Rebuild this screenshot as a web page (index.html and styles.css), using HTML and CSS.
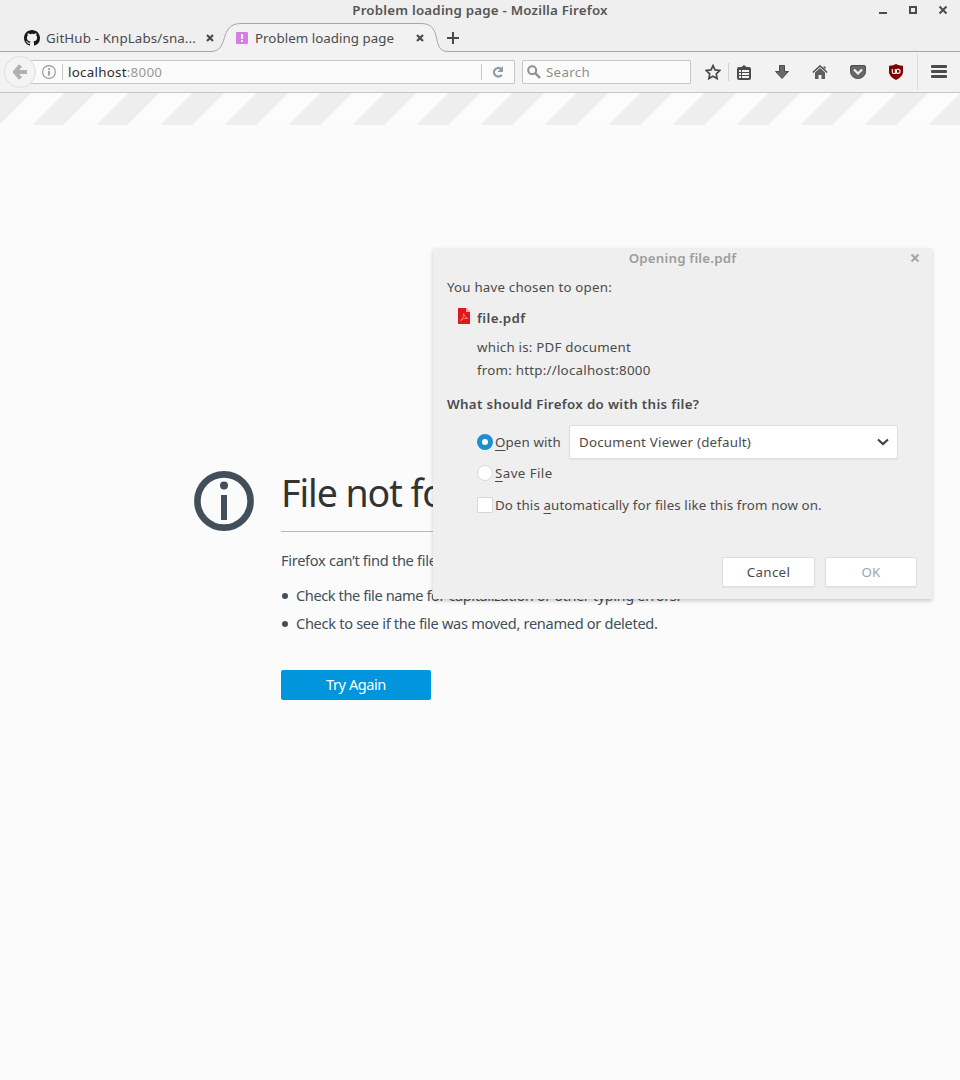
FILE: index.html
```html
<!DOCTYPE html>
<html lang="en">
<head>
<meta charset="utf-8">
<title>Problem loading page</title>
<link rel="stylesheet" href="styles.css">
</head>
<body>
<header class="chrome">
  <div class="titlebar">
    <span class="window-title">Problem loading page - Mozilla Firefox</span>
    <div class="window-controls">
      <svg width="10" height="10" viewBox="0 0 10 10"><path d="M1 7h8v2H1z" fill="#4b4b4b"/></svg>
      <svg width="10" height="10" viewBox="0 0 10 10"><path d="M2 2h6v6H2z" fill="none" stroke="#4b4b4b" stroke-width="2"/></svg>
      <svg width="10" height="10" viewBox="0 0 10 10"><path d="M1.5 1.5l7 7m0-7l-7 7" stroke="#4b4b4b" stroke-width="2"/></svg>
    </div>
  </div>
  <div class="tabstrip">
    <svg class="tab-outline" width="960" height="29" viewBox="0 0 960 29">
      <path d="M211 29C229 29 219 .5 241 .5H422C444 .5 432 29 450 29Z" fill="#f2f2f2"/>
      <path d="M0 28.500H211C230 28.500 218 .5 241 .5H421C444 .5 430 28.500 448 28.500H960" fill="none" stroke="#a4a6a9"/>
    </svg>
    <div class="tab tab-github">
      <svg width="16" height="16" viewBox="0 0 16 16"><path fill="#1b1817" d="M8 0C3.580 0 0 3.580 0 8c0 3.540 2.290 6.530 5.470 7.590.4.070.55-.17.55-.38 0-.19-.01-.82-.01-1.490-2.010.37-2.530-.49-2.690-.94-.09-.23-.48-.94-.82-1.130-.28-.15-.68-.52-.01-.53.63-.01 1.080.58 1.230.82.72 1.210 1.870.87 2.330.66.07-.52.28-.87.51-1.070-1.780-.2-3.640-.89-3.640-3.950 0-.87.31-1.590.82-2.150-.08-.2-.36-1.020.08-2.120 0 0 .67-.21 2.200.82A7.600 7.600 0 0 1 8 3.870c.68 0 1.360.09 2 .27 1.530-1.040 2.200-.82 2.200-.82.44 1.100.16 1.920.08 2.120.51.56.82 1.270.82 2.150 0 3.070-1.870 3.750-3.650 3.950.29.25.54.73.54 1.480 0 1.070-.01 1.930-.01 2.200 0 .21.15.46.55.38A8 8 0 0 0 16 8c0-4.420-3.580-8-8-8z"/></svg>
      <span class="tab-label label-github">GitHub - KnpLabs/sna...</span>
      <svg class="tab-close" width="8" height="8" viewBox="0 0 8 8"><path d="M1 1l6 6m0-6l-6 6" stroke="#4b4b4b" stroke-width="2.200"/></svg>
    </div>
    <div class="tab tab-problem">
      <svg width="12" height="12" viewBox="0 0 12 12"><rect width="12" height="12" rx="1" fill="#d67fe2"/><path d="M5 2h2v5H5zM5 8h2v2H5z" fill="#fff"/></svg>
      <span class="tab-label label-problem">Problem loading page</span>
      <svg class="tab-close" width="8" height="8" viewBox="0 0 8 8"><path d="M1 1l6 6m0-6l-6 6" stroke="#4b4b4b" stroke-width="2.200"/></svg>
    </div>
    <svg class="new-tab" width="12" height="12" viewBox="0 0 12 12"><path d="M6 0v12M0 6h12" stroke="#4b4b4b" stroke-width="2"/></svg>
  </div>
  <div class="toolbar">
    <div class="back">
      <svg width="14" height="16" viewBox="0 0 14 16"><path d="M7.500 1.500L2 8l5.500 6.500M2 8h12" fill="none" stroke="#b1b1b1" stroke-width="4"/></svg>
    </div>
    <div class="urlbar">
      <svg class="identity" width="14" height="14" viewBox="0 0 14 14"><circle cx="7" cy="7" r="6.400" fill="none" stroke="#979797" stroke-width="1.100"/><path d="M6.200 6h1.600v4.500H6.200zM6.200 3.300h1.600v1.600H6.200z" fill="#8b8b8b"/></svg>
      <span class="bar-line"></span>
      <span class="url">localhost<span class="port">:8000</span></span>
      <span class="bar-line reload-line"></span>
      <svg class="reload" width="12" height="12" viewBox="0 0 12 12"><path d="M8.800 2.800A4.300 4.300 0 1 0 9.700 8.800" fill="none" stroke="#8d9ba8" stroke-width="2.200"/><path d="M11 0v6H5.500z" fill="#8d9ba8"/></svg>
    </div>
    <div class="searchbar">
      <svg width="14" height="14" viewBox="0 0 14 14"><circle cx="5.200" cy="5.200" r="4" fill="none" stroke="#8f8f8f" stroke-width="2"/><path d="M8.200 8.200l4.800 4.800" stroke="#8f8f8f" stroke-width="2.400"/></svg>
      <span class="search-text">Search</span>
    </div>
    <div class="tools">
      <svg width="16" height="16" viewBox="0 0 16 16"><path d="M8 1.600l2 4.300 4.700.6-3.400 3.300.8 4.800L8 12.300l-4.100 2.300.8-4.800L1.300 6.500 6 5.900z" fill="none" stroke="#4a4a4a" stroke-width="1.700"/></svg>
      <span class="tool-line"></span>
      <svg width="14" height="15" viewBox="0 0 14 15"><path d="M2 2h2.500L7 0l2.500 2H12a2 2 0 0 1 2 2V13a2 2 0 0 1-2 2H2a2 2 0 0 1-2-2V4a2 2 0 0 1 2-2z" fill="#4b4b4b"/><path d="M2 5h2v2H2zM5 5h7v2H5zM2 8h2v2H2zM5 8h7v2H5zM2 11h2v2H2zM5 11h7v2H5z" fill="#f1f1f1"/></svg>
      <svg width="14" height="14" viewBox="0 0 14 14"><path d="M4.500.5h5v6h4L7 13.500.5 6.500h4z" fill="#686868" stroke="#4b4b4b"/></svg>
      <svg width="16" height="14" viewBox="0 0 16 14"><path d="M3 7.500l5-4.600 5 4.600V14H9.500v-4h-3v4H3z" fill="#606060"/><path d="M.8 7.500L8 .9l7.200 6.600" fill="none" stroke="#505050" stroke-width="1.500"/><path d="M11.500 1.500h2v3l-2-2z" fill="#505050"/></svg>
      <svg width="16" height="14" viewBox="0 0 16 14"><path d="M2 .5h12q1.500 0 1.500 1.500v4.500a7.500 7 0 0 1-15 0V2Q.5.500 2 .5z" fill="#686868" stroke="#4b4b4b"/><path d="M4 4.500l4 4 4-4" fill="none" stroke="#f1f1f1" stroke-width="2.200"/></svg>
      <svg width="14" height="16" viewBox="0 0 14 16"><path d="M7 0q3 2 7 1.800v7Q13 13 7 16 1 13 0 8.800v-7Q4 2 7 0z" fill="#800000"/><path d="M3.300 5v3q0 1.500 1.500 1.500h1.500V5M8.500 5.200h.5a2 2 0 0 1 0 4.200h-.5q-1 0-1-1V6.200q0-1 1-1z" fill="none" stroke="#fff" stroke-width="1.100"/></svg>
    </div>
    <div class="menu-button">
      <svg width="16" height="13" viewBox="0 0 16 13"><rect width="16" height="3" rx="1"/><rect y="5" width="16" height="3" rx="1"/><rect y="10" width="16" height="3" rx="1"/></svg>
    </div>
  </div>
</header>
<main class="page">
  <div class="stripes"></div>
  <section class="error">
    <svg class="info" width="60" height="60" viewBox="0 0 60 60"><circle cx="30" cy="30" r="26.600" fill="none" stroke="#424f5a" stroke-width="6.600"/><circle cx="30" cy="14.500" r="4" fill="#424f5a"/><path d="M27 24h6v25h-6z" fill="#424f5a"/></svg>
    <div class="error-body">
      <h1 class="heading">File not found</h1>
      <p class="lead">Firefox can’t find the file at http://localhost:8000.</p>
      <ul class="hints">
        <li class="hint-a">Check the file name for capitalization or other typing errors.</li>
        <li class="hint-b">Check to see if the file was moved, renamed or deleted.</li>
      </ul>
      <button class="retry"><span>Try Again</span></button>
    </div>
  </section>
</main>
<div class="dialog">
  <div class="dialog-title"><span class="dialog-name">Opening file.pdf</span>
    <svg class="dialog-close" width="10" height="10" viewBox="0 0 10 10"><path d="M1.500 1.500l7 7m0-7l-7 7" stroke="#a8a8a8" stroke-width="2.200"/></svg>
  </div>
  <p class="row chosen"><span class="t-chosen">You have chosen to open:</span></p>
  <div class="row file"><svg width="12" height="16" viewBox="0 0 12 16"><path d="M0 0h8l4 4v12H0z" fill="#df1818"/><path d="M8 0l4 4H8z" fill="#f3aaaa"/><path d="M5.600 5.500q1 4-3.300 7.200 3-3 7.500-2.300Q6.500 9.500 5.600 5.500z" fill="none" stroke="#f58b8b" stroke-width=".8"/></svg><b class="t-file">file.pdf</b></div>
  <p class="row which"><span class="t-which">which is: PDF document</span></p>
  <p class="row from"><span class="t-from">from: http://localhost:8000</span></p>
  <p class="row question"><b class="t-question">What should Firefox do with this file?</b></p>
  <div class="row open"><i class="radio selected"></i><span class="t-open"><u>O</u>pen with</span>
    <div class="select"><span class="t-select">Document Viewer (default)</span><svg width="12" height="8" viewBox="0 0 12 8"><path d="M1 1.500l5 4.500 5-4.500" fill="none" stroke="#3f3f3f" stroke-width="2.100"/></svg></div>
  </div>
  <div class="row save"><i class="radio"></i><span class="t-save"><u>S</u>ave File</span></div>
  <div class="row auto"><i class="checkbox"></i><span class="t-auto">Do this <u>a</u>utomatically for files like this from now on.</span></div>
  <div class="buttons"><button class="button cancel"><span class="t-cancel">Cancel</span></button><button class="button ok">OK</button></div>
</div>
</body>
</html>
```
FILE: styles.css
```css
* { box-sizing: border-box; }
body { margin: 0; height: 1080px; overflow: hidden; background: #fbfbfb; color: #4b4b4b; font: 13.33px/20px "Noto Sans", "Open Sans", sans-serif; white-space: nowrap; }
p, h1, ul { margin: 0; padding: 0; font: inherit; }
svg { flex: none; display: block; }
button { font: inherit; color: inherit; padding: 0; }

.chrome { background: #efefef; }
.titlebar { height: 23px; position: relative; text-align: center; }
.window-title { font-weight: 600; color: #555; letter-spacing: .2px; }
.window-controls { position: absolute; right: 12px; top: 5px; display: flex; gap: 20px; }

.tabstrip { position: relative; height: 29px; display: flex; align-items: center; }
.tab-outline { position: absolute; left: 0; top: 0; }
.tab { position: relative; display: flex; align-items: center; height: 29px; padding-top: 1px; }
.tab-github { width: 214px; margin-left: 24px; }
.tab-problem { width: 208px; margin-left: -2px; }
.tab-label { margin-left: 6px; }
.label-github { letter-spacing: .13px; }
.label-problem { margin-left: 7px; letter-spacing: .03px; }
.tab-close { margin-left: auto; }
.tab-github .tab-close { margin-right: 24px; }
.tab-problem .tab-close { margin-right: 20px; }
.new-tab { position: relative; margin-left: 3px; }

.toolbar { height: 41px; background: #f2f2f2; border-bottom: 1px solid #c5c5c5; display: flex; align-items: center; padding-left: 4px; }
.back { width: 32px; height: 32px; border: 1px solid #dedede; border-radius: 50%; background: #f4f4f4; display: flex; align-items: center; justify-content: center; position: relative; z-index: 1; flex: none; }
.urlbar { width: 485px; height: 24px; margin-left: -6px; padding-left: 11px; border: 1px solid #c6c6c6; border-radius: 2px; background: #fbfbfb; display: flex; align-items: center; flex: none; }
.bar-line { width: 1px; height: 16px; background: #c6c6c6; margin: 0 5px 0 6px; }
.url { color: #2e2e2e; letter-spacing: .27px; }
.port { color: #999; }
.reload-line { margin: 0 10px 0 auto; }
.reload { margin-right: 10px; }
.searchbar { width: 169px; height: 24px; margin-left: 7px; padding-left: 4px; border: 1px solid #c6c6c6; border-radius: 2px; background: #fbfbfb; display: flex; align-items: center; gap: 5px; color: #8f8f8f; flex: none; }
.search-text { letter-spacing: .3px; }
.tools { display: flex; align-items: center; margin-left: 14px; }
.tool-line { width: 1px; height: 18px; background: #d2d2d2; margin: 0 8px 0 7px; }
.tools svg + svg { margin-left: 23px; }
.tools svg:nth-of-type(3) { margin-left: 24px; }
.tools svg:nth-of-type(5) { margin-left: 22px; }
.menu-button { width: 43px; height: 36px; margin-left: 14px; padding-left: 13px; border-left: 1px solid #dcdcdc; display: flex; align-items: center; fill: #4b4b4b; padding-bottom: 1px; }

.stripes { height: 32px; background: repeating-linear-gradient(135deg, #eee 0 22.627px, #fcfcfc 22.627px 45.255px); }
.error { display: flex; padding: 346px 0 0 194px; color: #424f5a; font-size: 14.6px; letter-spacing: -.4px; }
.error-body { margin-left: 27px; width: 485px; }
.heading { height: 61px; border-bottom: 1px solid #b8b8b8; font-size: 37.5px; line-height: 44px; color: #333; font-weight: 400; letter-spacing: -1.05px; }
.lead { margin-top: 18px; letter-spacing: -.3px; }
.hints { list-style: none; margin-top: 11px; }
.hints li { height: 28px; line-height: 28px; display: flex; align-items: center; }
.hints li::before { content: ""; width: 6px; height: 6px; border-radius: 50%; background: #424f5a; margin: 2px 8px 0 1px; }
.hint-a { letter-spacing: -.42px; }
.hint-b { letter-spacing: -.31px; }
.retry { display: block; width: 150px; height: 30px; margin-top: 33px; padding-bottom: 2px; border: 0; border-radius: 2px; background: #0095dd; color: #fff; letter-spacing: -.45px; }

.dialog { position: absolute; left: 433px; top: 248px; width: 499px; height: 351px; background: #efefef; box-shadow: 0 2px 4px rgba(0, 0, 0, .2); display: flex; flex-direction: column; padding-left: 14px; }
.dialog-title { position: relative; height: 24px; margin-left: -14px; text-align: center; font-weight: 600; color: #9d9d9d; letter-spacing: .18px; }
.dialog-close { position: absolute; right: 12px; top: 5px; }
.row { display: flex; align-items: center; flex: none; height: 20px; }
.row b { font-weight: 600; }
.chosen { margin-top: 5px; letter-spacing: .19px; }
.file { margin-top: 11px; padding-left: 11px; gap: 7px; letter-spacing: .38px; }
.file svg { margin-top: -4px; }
.which { margin: 9px 0 0 30px; letter-spacing: .22px; }
.from { margin: 3px 0 0 30px; letter-spacing: .23px; }
.question { margin-top: 14px; letter-spacing: .33px; }
.open { height: 34px; margin: 11px 0 0 30px; letter-spacing: .12px; }
.radio, .checkbox { width: 16px; height: 16px; margin-right: 2px; background: #fff; border: 1px solid #d8d8d8; flex: none; }
.radio { border-radius: 50%; }
.selected { border: 5px solid #1d8fce; }
.checkbox { border-radius: 1px; }
u { text-decoration-thickness: 1px; text-underline-offset: 3px; }
.select { width: 329px; height: 34px; margin-left: auto; margin-right: 34px; padding: 0 8px 0 9px; background: #fff; border: 1px solid #dedede; border-radius: 2px; box-shadow: 0 1px 1px rgba(0, 0, 0, .05); display: flex; align-items: center; justify-content: space-between; letter-spacing: .21px; }
.save { margin: 4px 0 0 30px; letter-spacing: .42px; }
.auto { margin: 12px 0 0 30px; letter-spacing: .11px; }
.buttons { display: flex; justify-content: flex-end; gap: 10px; margin: 42px 15px 0 0; }
.button { height: 30px; width: 93px; background: #fff; border: 1px solid #dedede; border-radius: 2px; box-shadow: 0 1px 1px rgba(0, 0, 0, .05); }
.cancel { letter-spacing: .3px; }
.ok { width: 92px; color: #a5a5a5; letter-spacing: .2px; }
```
